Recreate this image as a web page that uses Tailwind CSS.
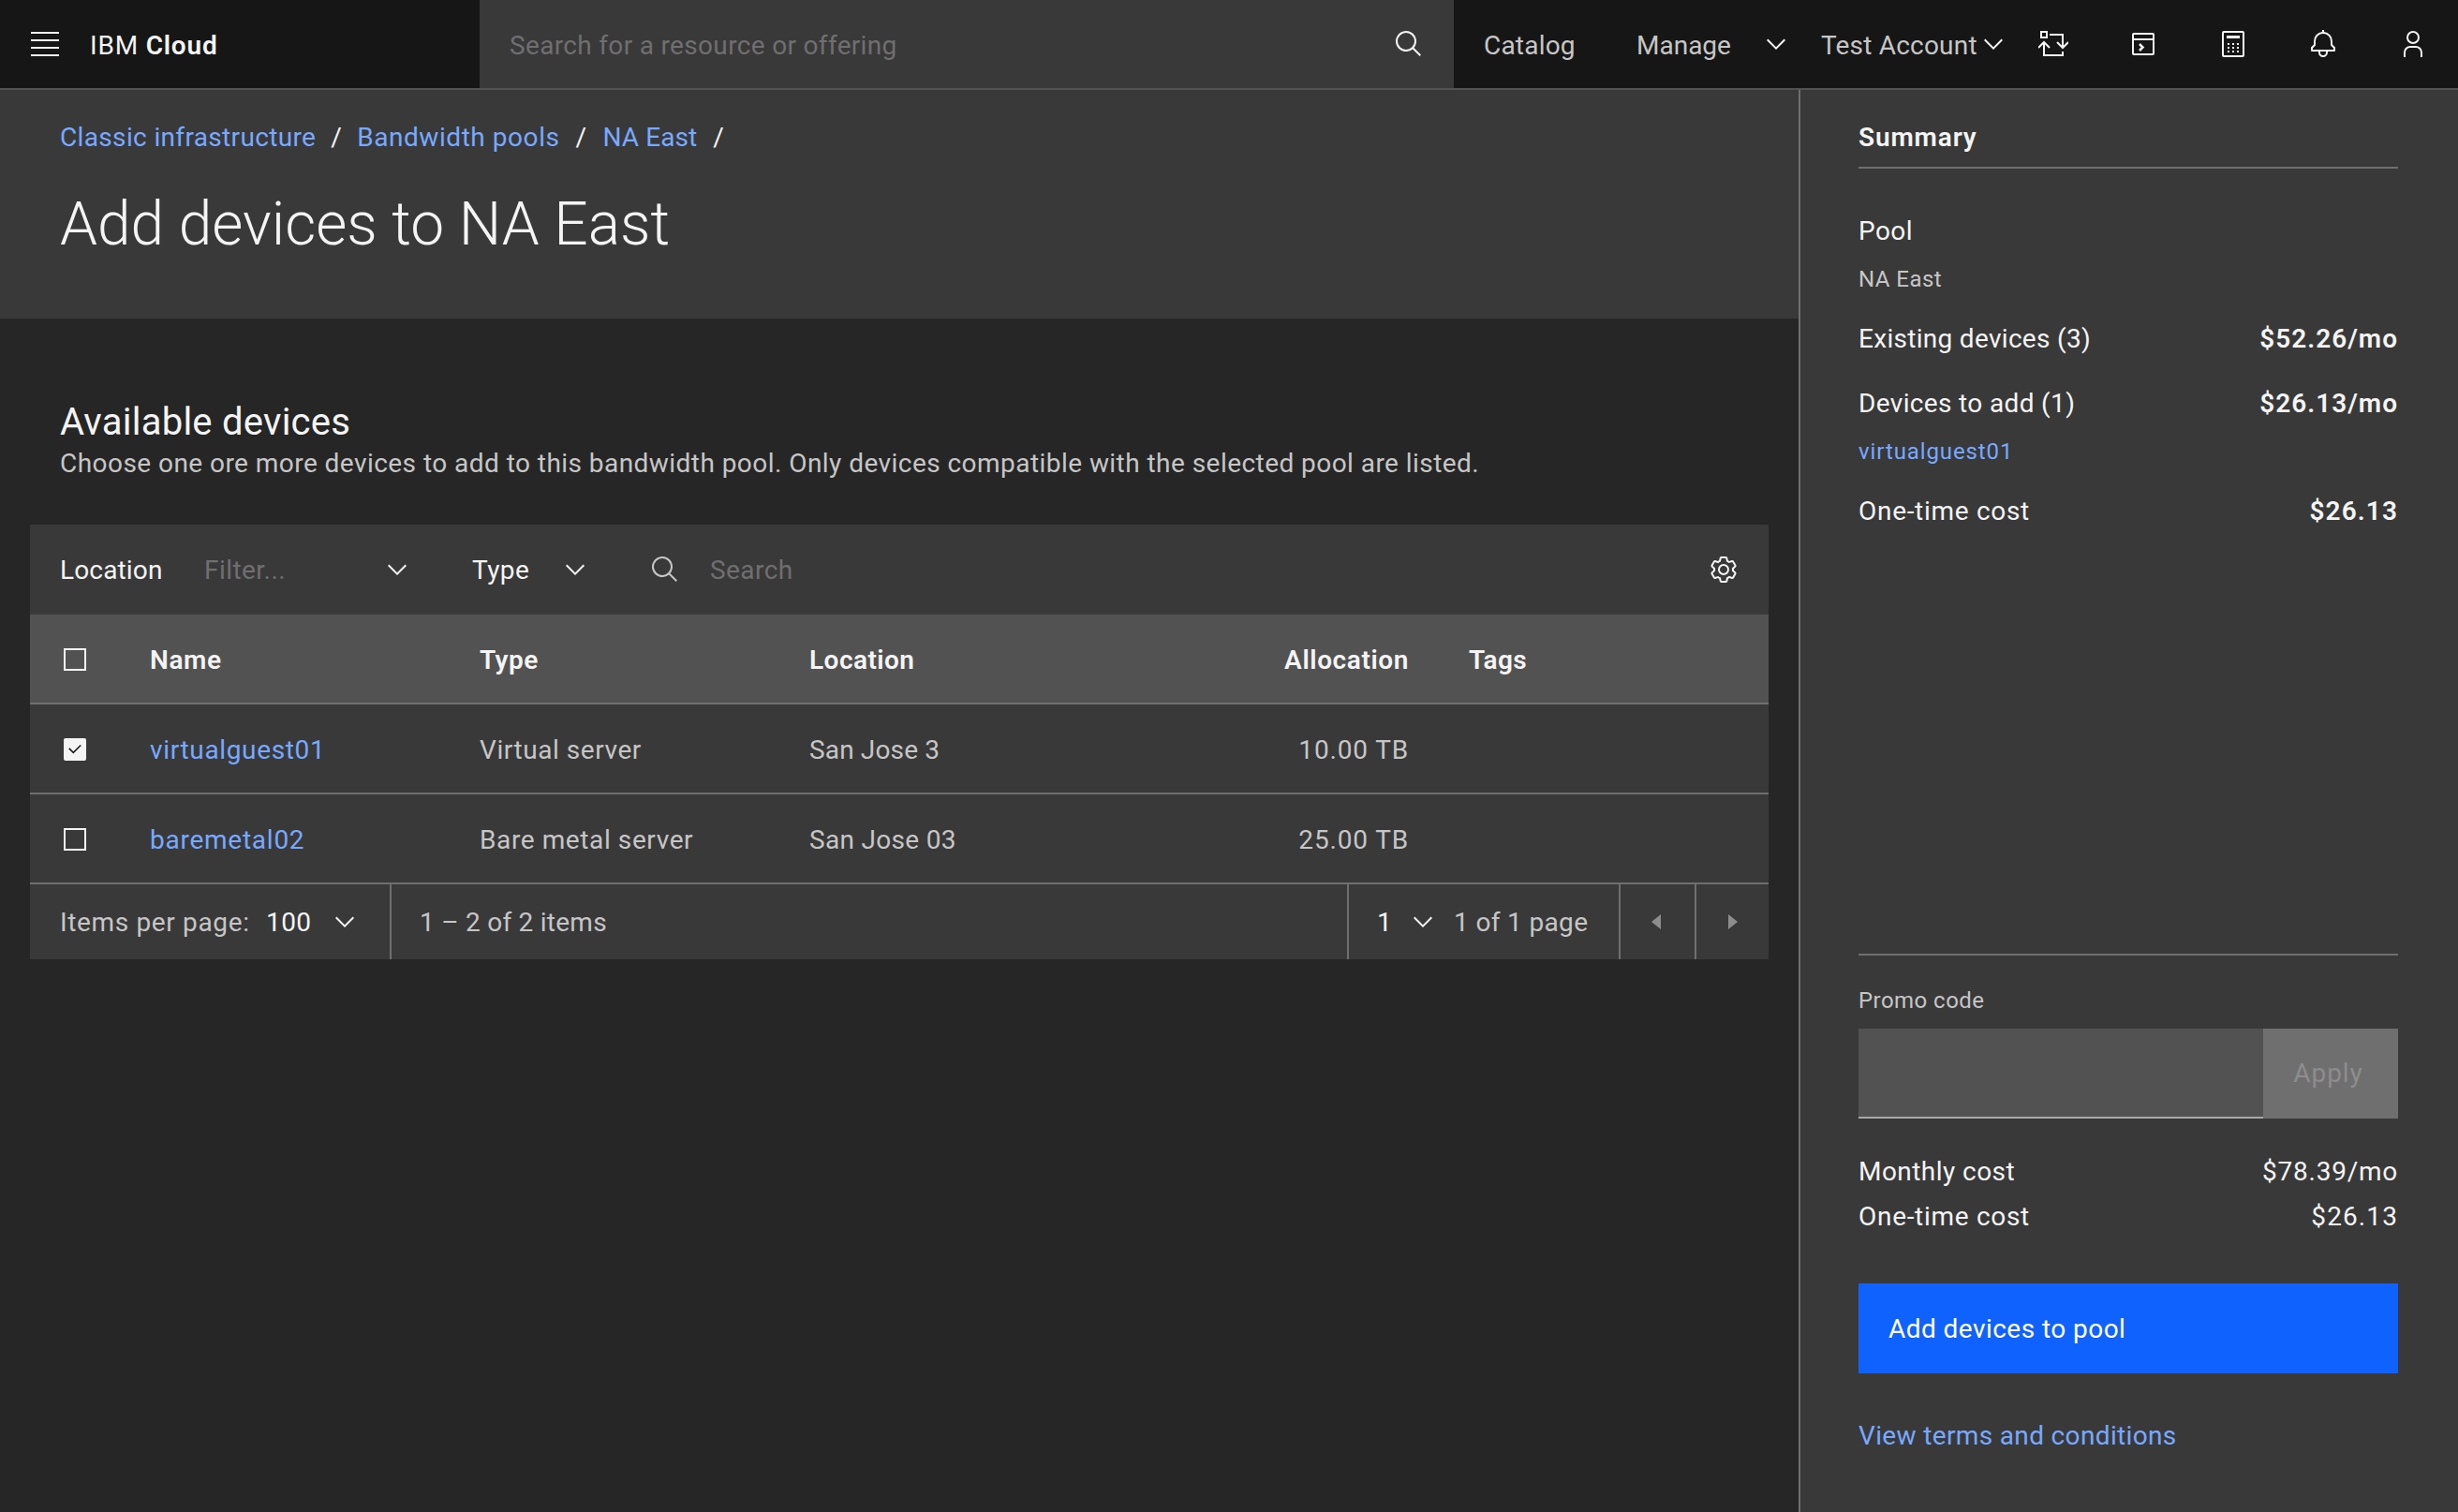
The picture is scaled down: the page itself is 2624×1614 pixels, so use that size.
<!DOCTYPE html>
<html lang="en">
<head>
  <meta charset="UTF-8">
  <title>Add devices to NA East</title>
  <script src="https://cdn.jsdelivr.net/npm/@tailwindcss/browser@4"></script>
</head>
<body class="bg-[#262626] h-[1614px] overflow-hidden font-['Roboto',sans-serif] text-[28px] tracking-[0.45px] text-[#f4f4f4]">

  <!-- Top bar -->
  <header class="h-[96px] flex bg-[#161616] border-b-2 border-[#525252]">
    <div class="w-[512px] flex items-center">
      <div class="w-[96px] flex justify-center">
        <svg class="w-[32px] h-[32px]" viewBox="0 0 32 32" fill="#f4f4f4"><path d="M1 4h30v2H1zM1 12h30v2H1zM1 20h30v2H1zM1 28h30v2H1z" transform="translate(0 -1)"/></svg>
      </div>
      <span class="pt-[3px] tracking-[0.8px]">IBM <span class="font-semibold">Cloud</span></span>
    </div>
    <div class="w-[1040px] bg-[#393939] flex items-center justify-between pl-[32px] pr-[32px]">
      <span class="pt-[3px] tracking-[0.33px] text-[#6f6f6f]">Search for a resource or offering</span>
      <svg class="w-[32px] h-[32px]" viewBox="0 0 32 32" fill="#f4f4f4"><path d="M29 27.5859l-7.5521-7.5521a11.0177 11.0177 0 1 0-1.4141 1.4141L27.5859 29ZM4 13a9 9 0 1 1 9 9A9.01 9.01 0 0 1 4 13Z"/></svg>
    </div>
    <nav class="flex-1 flex items-center text-[#c6c6c6] whitespace-nowrap">
      <span class="w-[195px] pl-[32px] pt-[3px] tracking-[0.2px]">Catalog</span>
      <span class="w-[133px] pt-[3px] tracking-normal">Manage</span>
      <span class="w-[64px]"><svg class="w-[32px] h-[32px]" viewBox="0 0 32 32" fill="#f4f4f4"><path d="M16 22 6 12l1.4-1.4 8.6 8.6 8.6-8.6L26 12z"/></svg></span>
      <span class="w-[168px] pt-[3px] tracking-[0.2px]">Test Account</span>
      <span class="w-[32px]"><svg class="w-[32px] h-[32px]" viewBox="0 0 32 32" fill="#f4f4f4"><path d="M16 22 6 12l1.4-1.4 8.6 8.6 8.6-8.6L26 12z"/></svg></span>
      <span class="w-[96px] flex justify-center">
        <svg class="w-[32px] h-[32px]" viewBox="0 0 32 32" fill="none" stroke="#f4f4f4" stroke-width="2"><path d="M12 6h14v14M20 14l6 6 6-6M6 14v14h20v-4M0 20l6-6 6 6"/><rect x="3" y="3" width="6" height="6"/></svg>
      </span>
      <span class="w-[96px] flex justify-center">
        <svg class="w-[32px] h-[32px]" viewBox="0 0 32 32" fill="none" stroke="#f4f4f4" stroke-width="2"><rect x="5" y="5" width="22" height="22" rx="1"/><path d="M5 11h22"/><path d="m12 16 3.500 3.500-3.500 3.500" stroke-width="2.500"/></svg>
      </span>
      <span class="w-[96px] flex justify-center">
        <svg class="w-[32px] h-[32px]" viewBox="0 0 32 32" fill="#f4f4f4"><path d="M26 2H6a2 2 0 0 0-2 2v24a2 2 0 0 0 2 2h20a2 2 0 0 0 2-2V4a2 2 0 0 0-2-2Zm0 26H6V4h20Z"/><path d="M9 7h14v3H9zM10 15h2v2h-2zM15 15h2v2h-2zM20 15h2v2h-2zM10 19h2v2h-2zM15 19h2v2h-2zM20 19h2v2h-2zM10 23h2v2h-2zM15 23h2v2h-2zM20 23h2v2h-2z"/></svg>
      </span>
      <span class="w-[96px] flex justify-center">
        <svg class="w-[32px] h-[32px]" viewBox="0 0 32 32" fill="#f4f4f4"><path d="M28.707 19.293 26 16.586V13a10.014 10.014 0 0 0-9-9.95V1h-2v2.05A10.014 10.014 0 0 0 6 13v3.586l-2.707 2.707A1 1 0 0 0 3 20v3a1 1 0 0 0 1 1h7v.777a5.152 5.152 0 0 0 4.5 5.199A5.006 5.006 0 0 0 21 25v-1h7a1 1 0 0 0 1-1v-3a1 1 0 0 0-.293-.707ZM19 25a3 3 0 0 1-6 0v-1h6Zm8-3H5v-1.586l2.707-2.707A1 1 0 0 0 8 17v-4a8 8 0 0 1 16 0v4a1 1 0 0 0 .293.707L27 20.414Z"/></svg>
      </span>
      <span class="w-[96px] flex justify-center">
        <svg class="w-[32px] h-[32px]" viewBox="0 0 32 32" fill="#f4f4f4"><path d="M16 4a5 5 0 1 1-5 5 5 5 0 0 1 5-5m0-2a7 7 0 1 0 7 7 7 7 0 0 0-7-7ZM26 30h-2v-5a5 5 0 0 0-5-5h-6a5 5 0 0 0-5 5v5H6v-5a7 7 0 0 1 7-7h6a7 7 0 0 1 7 7Z"/></svg>
      </span>
    </nav>
  </header>

  <div class="flex h-[1518px]">
    <!-- Left column -->
    <main class="w-[1920px]">
      <section class="h-[244px] bg-[#393939] px-[64px] pt-[33px]">
        <div class="flex items-center h-[36px] tracking-[0.35px] text-[#78a9ff]">
          <a>Classic infrastructure</a><span class="text-[#f4f4f4] px-[16px]">/</span>
          <a class="tracking-[0.55px]">Bandwidth pools</a><span class="text-[#f4f4f4] px-[17px]">/</span>
          <a class="tracking-[0.1px]">NA East</a><span class="text-[#f4f4f4] px-[17px]">/</span>
        </div>
        <h1 class="mt-[37px] text-[64px] leading-[76px] font-light tracking-normal">Add devices to NA East</h1>
      </section>

      <section class="pt-[89px] px-[64px]">
        <h2 class="text-[40px] leading-[44px] tracking-[0.25px]">Available devices</h2>
        <p class="text-[#c6c6c6] leading-[44px]">Choose one ore more devices to add to this bandwidth pool. Only devices compatible with the selected pool are listed.</p>
      </section>

      <section class="mx-[32px] mt-[43px] bg-[#393939]">
        <!-- Toolbar -->
        <div class="h-[96px] flex items-center pl-[32px] pr-[32px]">
          <span class="w-[154px] pt-[2px] tracking-[0.15px]">Location</span>
          <span class="w-[190px] pt-[2px] text-[#6f6f6f]">Filter...</span>
          <svg class="w-[32px] h-[32px]" viewBox="0 0 32 32" fill="#f4f4f4"><path d="M16 22 6 12l1.4-1.4 8.6 8.6 8.6-8.6L26 12z"/></svg>
          <span class="ml-[64px] w-[94px] pt-[2px]">Type</span>
          <svg class="w-[32px] h-[32px]" viewBox="0 0 32 32" fill="#f4f4f4"><path d="M16 22 6 12l1.4-1.4 8.6 8.6 8.6-8.6L26 12z"/></svg>
          <svg class="ml-[64px] w-[32px] h-[32px]" viewBox="0 0 32 32" fill="#c6c6c6"><path d="M29 27.5859l-7.5521-7.5521a11.0177 11.0177 0 1 0-1.4141 1.4141L27.5859 29ZM4 13a9 9 0 1 1 9 9A9.01 9.01 0 0 1 4 13Z"/></svg>
          <span class="ml-[32px] pt-[2px] text-[#6f6f6f]">Search</span>
          <svg class="ml-auto w-[32px] h-[32px]" viewBox="0 0 32 32" fill="#f4f4f4"><path d="M27,16.76c0-.25,0-.5,0-.76s0-.51,0-.77l1.92-1.68A2,2,0,0,0,29.3,11L26.94,7a2,2,0,0,0-1.73-1,2,2,0,0,0-.64.1l-2.43.82a11.35,11.35,0,0,0-1.31-.75l-.51-2.52a2,2,0,0,0-2-1.61H13.64a2,2,0,0,0-2,1.61l-.51,2.52a11.48,11.48,0,0,0-1.32.75L7.43,6.06A2,2,0,0,0,6.79,6,2,2,0,0,0,5.06,7L2.7,11a2,2,0,0,0,.41,2.51L5,15.24c0,.25,0,.5,0,.76s0,.51,0,.77L3.11,18.45A2,2,0,0,0,2.7,21L5.06,25a2,2,0,0,0,1.73,1,2,2,0,0,0,.64-.1l2.43-.82a11.35,11.35,0,0,0,1.31.75l.51,2.52a2,2,0,0,0,2,1.61h4.72a2,2,0,0,0,2-1.61l.51-2.52a11.48,11.48,0,0,0,1.32-.75l2.42.82a2,2,0,0,0,.64.1,2,2,0,0,0,1.73-1L29.3,21a2,2,0,0,0-.41-2.51ZM25.21,24l-3.43-1.16a8.86,8.86,0,0,1-2.71,1.57L18.36,28H13.64l-.71-3.55a9.36,9.36,0,0,1-2.7-1.57L6.79,24,4.43,20l2.72-2.4a8.9,8.9,0,0,1,0-3.13L4.43,12,6.79,8l3.43,1.16a8.86,8.86,0,0,1,2.71-1.57L13.64,4h4.72l.71,3.55a9.36,9.36,0,0,1,2.7,1.57L25.21,8,27.57,12l-2.72,2.4a8.9,8.9,0,0,1,0,3.13L27.57,20Z"/><path d="M16,22a6,6,0,1,1,6-6A5.94,5.94,0,0,1,16,22Zm0-10a3.91,3.91,0,0,0-4,4,3.91,3.91,0,0,0,4,4,3.91,3.91,0,0,0,4-4A3.91,3.91,0,0,0,16,12Z"/></svg>
        </div>

        <!-- Table -->
        <table class="w-full table-fixed border-collapse">
          <colgroup>
            <col class="w-[128px]"><col class="w-[352px]"><col class="w-[352px]"><col class="w-[336px]"><col class="w-[336px]"><col>
          </colgroup>
          <thead class="bg-[#525252] font-semibold">
            <tr class="h-[95px] border-b-2 border-[#6f6f6f] text-left">
              <th class="pl-[36px] pt-[2px]"><span class="block w-[24px] h-[24px] border-2 border-[#f4f4f4]"></span></th>
              <th class="font-semibold pt-[4px] tracking-[0.6px]">Name</th>
              <th class="font-semibold pt-[4px]">Type</th>
              <th class="font-semibold pt-[4px]">Location</th>
              <th class="font-semibold pt-[4px] text-right pr-[32px] tracking-[0.6px]">Allocation</th>
              <th class="font-semibold pt-[4px] pl-[32px] tracking-[0.3px]">Tags</th>
            </tr>
          </thead>
          <tbody class="text-[#c6c6c6]">
            <tr class="h-[96px] border-b-2 border-[#6f6f6f]">
              <td class="pl-[36px] pt-[2px]">
                <span class="flex items-center justify-center w-[24px] h-[24px] rounded-[2px] bg-[#f4f4f4]">
                  <svg class="w-[18px] h-[18px]" viewBox="0 0 32 32" fill="#161616"><path d="M13 24 4 15l1.9-1.9 7.1 7.1L26.1 7 28 8.9z"/></svg>
                </span>
              </td>
              <td class="pt-[4px] tracking-[0.65px] text-[#78a9ff]">virtualguest01</td>
              <td class="pt-[4px] tracking-[0.55px]">Virtual server</td>
              <td class="pt-[4px] tracking-[0.15px]">San Jose 3</td>
              <td class="pt-[4px] tracking-[0.85px] text-right pr-[32px]">10.00 TB</td>
              <td></td>
            </tr>
            <tr class="h-[96px] border-b-2 border-[#6f6f6f]">
              <td class="pl-[36px] pt-[2px]"><span class="block w-[24px] h-[24px] border-2 border-[#f4f4f4]"></span></td>
              <td class="pt-[4px] tracking-[0.75px] text-[#78a9ff]">baremetal02</td>
              <td class="pt-[4px] tracking-[0.6px]">Bare metal server</td>
              <td class="pt-[4px] tracking-[0.3px]">San Jose 03</td>
              <td class="pt-[4px] tracking-[0.85px] text-right pr-[32px]">25.00 TB</td>
              <td></td>
            </tr>
          </tbody>
        </table>

        <!-- Pagination -->
        <div class="h-[80px] flex items-center text-[#c6c6c6]">
          <div class="w-[386px] h-full flex items-center pl-[32px] border-r-2 border-[#6f6f6f]">
            <span class="w-[220px] pt-[2px] tracking-[0.65px]">Items per page:</span>
            <span class="w-[68px] pt-[2px] text-[#f4f4f4]">100</span>
            <svg class="w-[32px] h-[32px]" viewBox="0 0 32 32" fill="#f4f4f4"><path d="M16 22 6 12l1.4-1.4 8.6 8.6 8.6-8.6L26 12z"/></svg>
          </div>
          <div class="w-[1022px] h-full flex items-center pl-[30px] pt-[2px] tracking-[0.25px] border-r-2 border-[#6f6f6f]">1 – 2 of 2 items</div>
          <div class="w-[290px] h-full flex items-center pl-[30px] border-r-2 border-[#6f6f6f]">
            <span class="w-[33px] pt-[2px] text-[#f4f4f4]">1</span>
            <svg class="w-[32px] h-[32px]" viewBox="0 0 32 32" fill="#f4f4f4"><path d="M16 22 6 12l1.4-1.4 8.6 8.6 8.6-8.6L26 12z"/></svg>
            <span class="ml-[17px] pt-[2px] tracking-[0.35px]">1 of 1 page</span>
          </div>
          <div class="w-[81px] h-full flex items-center justify-center pr-[4px] border-r-2 border-[#6f6f6f]">
            <svg class="w-[20px] h-[20px]" viewBox="0 0 20 20" fill="#8d8d8d"><path d="M15 2v16L5 10z"/></svg>
          </div>
          <div class="flex-1 h-full flex items-center justify-center">
            <svg class="w-[20px] h-[20px]" viewBox="0 0 20 20" fill="#8d8d8d"><path d="M5 2v16l10-8z"/></svg>
          </div>
        </div>
      </section>
    </main>

    <!-- Summary panel -->
    <aside class="flex-1 bg-[#393939] border-l-2 border-[#6f6f6f] pl-[62px] pr-[64px] flex flex-col">
      <h3 class="h-[84px] pt-[33px] leading-[36px] font-semibold tracking-[0.85px] border-b-2 border-[#6f6f6f]">Summary</h3>
      <div class="mt-[49px] leading-[36px]">Pool</div>
      <div class="mt-[15px] text-[24px] leading-[36px] text-[#c6c6c6]">NA East</div>
      <div class="mt-[28px] leading-[36px] flex justify-between"><span class="tracking-[0.3px]">Existing devices (3)</span><span class="font-semibold tracking-[1px]">$52.26/mo</span></div>
      <div class="mt-[33px] leading-[36px] flex justify-between"><span class="tracking-[0.35px]">Devices to add (1)</span><span class="font-semibold tracking-[1px]">$26.13/mo</span></div>
      <div class="mt-[15px] text-[24px] leading-[36px] tracking-[0.9px] text-[#78a9ff]">virtualguest01</div>
      <div class="mt-[28px] leading-[36px] flex justify-between"><span class="tracking-[0.7px]">One-time cost</span><span class="font-semibold tracking-[1.1px]">$26.13</span></div>

      <div class="mt-auto border-t-2 border-[#6f6f6f] pt-[35px]">
        <div class="text-[24px] leading-[26px] text-[#c6c6c6]">Promo code</div>
        <div class="mt-[17px] flex h-[96px]">
          <div class="flex-1 bg-[#525252] border-b-2 border-[#a8a8a8]"></div>
          <div class="w-[144px] pr-[5px] bg-[#6f6f6f] text-[#8d8d8d] tracking-[0.9px] flex items-center justify-center">Apply</div>
        </div>
        <div class="mt-[32px] pt-[1px] leading-[48px] flex justify-between"><span>Monthly cost</span><span class="tracking-[0.75px]">$78.39/mo</span></div>
        <div class="leading-[48px] flex justify-between"><span class="tracking-[0.7px]">One-time cost</span><span class="tracking-[1.1px]">$26.13</span></div>
        <button class="mt-[47px] w-full h-[96px] pt-[2px] bg-[#0f62fe] text-white text-left pl-[32px]">Add devices to pool</button>
        <div class="mt-[46px] mb-[63px] pt-[3px] leading-[36px] tracking-[0.35px] text-[#78a9ff]">View terms and conditions</div>
      </div>
    </aside>
  </div>
</body>
</html>
